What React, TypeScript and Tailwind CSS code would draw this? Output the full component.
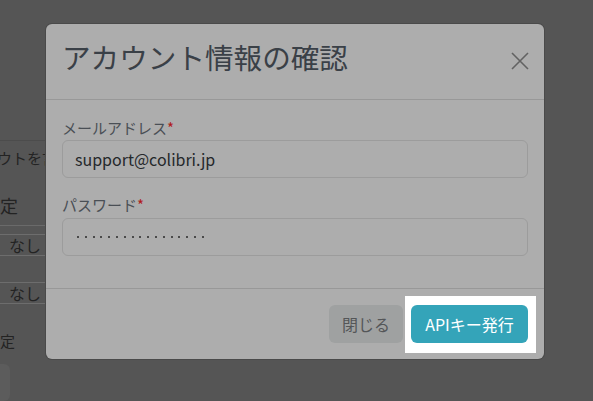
export default function App() {
  return (
    <div
      className="relative h-[401px] w-[593px] overflow-hidden bg-[#555555]"
      style={{ fontFamily: "'Noto Sans CJK JP', 'Noto Sans', sans-serif" }}
    >
      {/* ── page behind the overlay ── */}
      <div className="flex w-[46px] flex-col pt-[140px] text-[#232323]">
        <div className="h-px bg-[#4c4c4c]" />
        <p className="-ml-[3px] mt-[8px] whitespace-nowrap text-[15px] leading-[18px]">ウトを言</p>
        <p className="mt-[27px] text-[18px] leading-[22px]">定</p>
        <div className="mt-[9px] h-px bg-[#6a6a6a]" />
        <div className="mt-[8px] flex h-[22px] items-center justify-end border-y border-[#6d6d6d] pr-[5px] text-[16px]">なし</div>
        <div className="mt-[26px] flex h-[22px] items-center justify-end border-y border-[#6d6d6d] pr-[5px] text-[16px]">なし</div>
        <p className="mt-[28px] text-[15px] leading-[18px]">定</p>
        <div className="-ml-[10px] mt-[14px] h-[37px] w-[20px] rounded-[6px] bg-[#5c5c5c]" />
      </div>

      {/* ── modal ── */}
      <div className="absolute left-[46px] top-[24px] w-[498px] rounded-[6px] bg-[#adadad] shadow-[0_0_0_1px_#4a4a4a]">
        <div className="flex h-[76px] items-start justify-between border-b border-[#989898] px-4">
          <h2 className="mt-[16px] text-[28.6px] font-normal leading-[34px] text-[#3a4047]">アカウント情報の確認</h2>
          <button className="mr-[-1px] mt-[28px] p-0 text-[#626262]">
            <svg width="18" height="18" viewBox="0 0 18 18" fill="none" stroke="currentColor" strokeWidth="1.6">
              <path d="M1 1L17 17M17 1L1 17" />
            </svg>
          </button>
        </div>

        <div className="px-4 pb-[32px] pt-[17px]">
          <label className="mb-[1px] block text-[15px] leading-[22px] text-[#4a4f55]">
            メールアドレス<span className="text-[#b01a1a]">*</span>
          </label>
          <div className="flex h-[38px] items-center rounded-[6px] border border-[#9c9c9c] px-[12px] text-[16px] text-[#25282b]">
            support@colibri.jp
          </div>

          <label className="mb-[2px] mt-[16px] block text-[15px] leading-[22px] text-[#4a4f55]">
            パスワード<span className="text-[#b01a1a]">*</span>
          </label>
          <div className="flex h-[38px] items-center gap-[5.8px] rounded-[6px] border border-[#9c9c9c] px-[14px]">
            {Array.from({ length: 17 }).map((_, i) => (
              <span key={i} className="h-[2px] w-[2px] rounded-full bg-[#2a2a2a]" />
            ))}
          </div>
        </div>

        <div className="flex items-center justify-end gap-2 border-t border-[#989898] px-4 pb-[16px] pt-[16px]">
          <button className="h-[38px] w-[74px] rounded-[6px] bg-[#9fa1a1] text-[16px] text-[#545658]">閉じる</button>
          <span className="-mb-[10px] -ml-[6px] -mr-[8px] -mt-[9px] bg-white pb-[10px] pl-[6px] pr-[8px] pt-[9px]">
            <button className="block h-[38px] w-[117px] rounded-[6px] bg-[#34a4b9] text-[16px] text-white">APIキー発行</button>
          </span>
        </div>
      </div>
    </div>
  );
}
